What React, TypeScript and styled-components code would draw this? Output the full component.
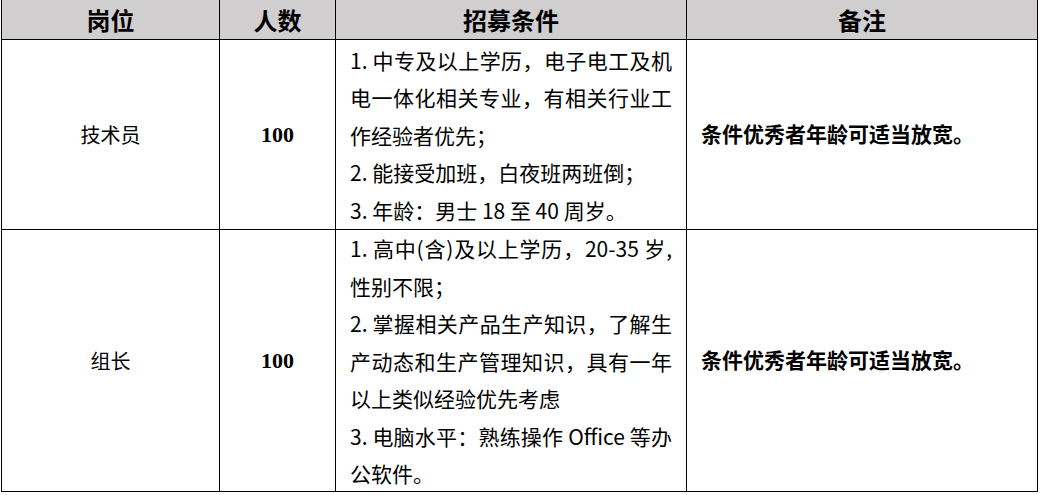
import { FC } from 'react'
import styled, { createGlobalStyle } from 'styled-components'

interface Job {
  title: string
  count: string
  lines: { text: string; full?: boolean }[]
  note: string
}

const jobs: Job[] = [
  {
    title: '技术员',
    count: '100',
    lines: [
      { text: '1. 中专及以上学历，电子电工及机', full: true },
      { text: '电一体化相关专业，有相关行业工', full: true },
      { text: '作经验者优先；' },
      { text: '2. 能接受加班，白夜班两班倒；' },
      { text: '3. 年龄：男士 18 至 40 周岁。' },
    ],
    note: '条件优秀者年龄可适当放宽。',
  },
  {
    title: '组长',
    count: '100',
    lines: [
      { text: '1. 高中(含)及以上学历，20-35 岁,', full: true },
      { text: '性别不限；' },
      { text: '2. 掌握相关产品生产知识，了解生', full: true },
      { text: '产动态和生产管理知识，具有一年', full: true },
      { text: '以上类似经验优先考虑' },
      { text: '3. 电脑水平：熟练操作 Office 等办', full: true },
      { text: '公软件。' },
    ],
    note: '条件优秀者年龄可适当放宽。',
  },
]

const headers = ['岗位', '人数', '招募条件', '备注']

const App: FC = () => (
  <>
    <GlobalStyle />
    <Table>
      {headers.map((h) => (
        <HeadCell key={h}>{h}</HeadCell>
      ))}
      {jobs.map((job) => (
        <Row key={job.title}>
          <Cell center>{job.title}</Cell>
          <Cell center bold>
            <Count>{job.count}</Count>
          </Cell>
          <Cell>
            <Lines>
              {job.lines.map((l) => (
                <Line key={l.text} full={l.full}>
                  {l.text}
                </Line>
              ))}
            </Lines>
          </Cell>
          <Cell bold>
            <Note>{job.note}</Note>
          </Cell>
        </Row>
      ))}
    </Table>
  </>
)

export default App

const GlobalStyle = createGlobalStyle`
  body {
    margin: 0;
    background: #fff;
    font-family: "Noto Sans CJK SC", "Liberation Serif", serif;
    color: #000;
  }
`

const Table = styled.div`
  display: grid;
  grid-template-columns: 218px 116px 351px 351px;
  grid-template-rows: 40px 190px 262px;
  margin-left: 1px;
  width: 1037px;
  border-left: 1px solid #000;
`

const HeadCell = styled.div`
  display: flex;
  align-items: center;
  justify-content: center;
  background: #d0cece;
  border-right: 1px solid #000;
  border-bottom: 1px solid #000;
  font-size: 24px;
  font-weight: 700;
  padding-bottom: 1px;
`

const Row = styled.div`
  display: contents;
`

const Cell = styled.div<{ center?: boolean; bold?: boolean }>`
  display: flex;
  align-items: center;
  justify-content: ${(p) => (p.center ? 'center' : 'flex-start')};
  padding: 0 ${(p) => (p.center ? 0 : 14)}px;
  border-right: 1px solid #000;
  border-bottom: 1px solid #000;
  font-size: 20px;
  font-weight: ${(p) => (p.bold ? 700 : 400)};
  box-sizing: border-box;
`

const Count = styled.span`
  font-family: "Liberation Serif", serif;
  font-size: 22px;
  font-weight: 700;
`

const Note = styled.span`
  font-size: 21px;
  padding-bottom: 3px;
`

const Lines = styled.div`
  width: 100%;
  padding-top: 2px;
`

const Line = styled.div<{ full?: boolean }>`
  font-size: 21px;
  line-height: 37.6px;
  white-space: nowrap;
  text-align: ${(p) => (p.full ? 'justify' : 'left')};
  text-align-last: ${(p) => (p.full ? 'justify' : 'left')};
  text-justify: inter-character;
`
